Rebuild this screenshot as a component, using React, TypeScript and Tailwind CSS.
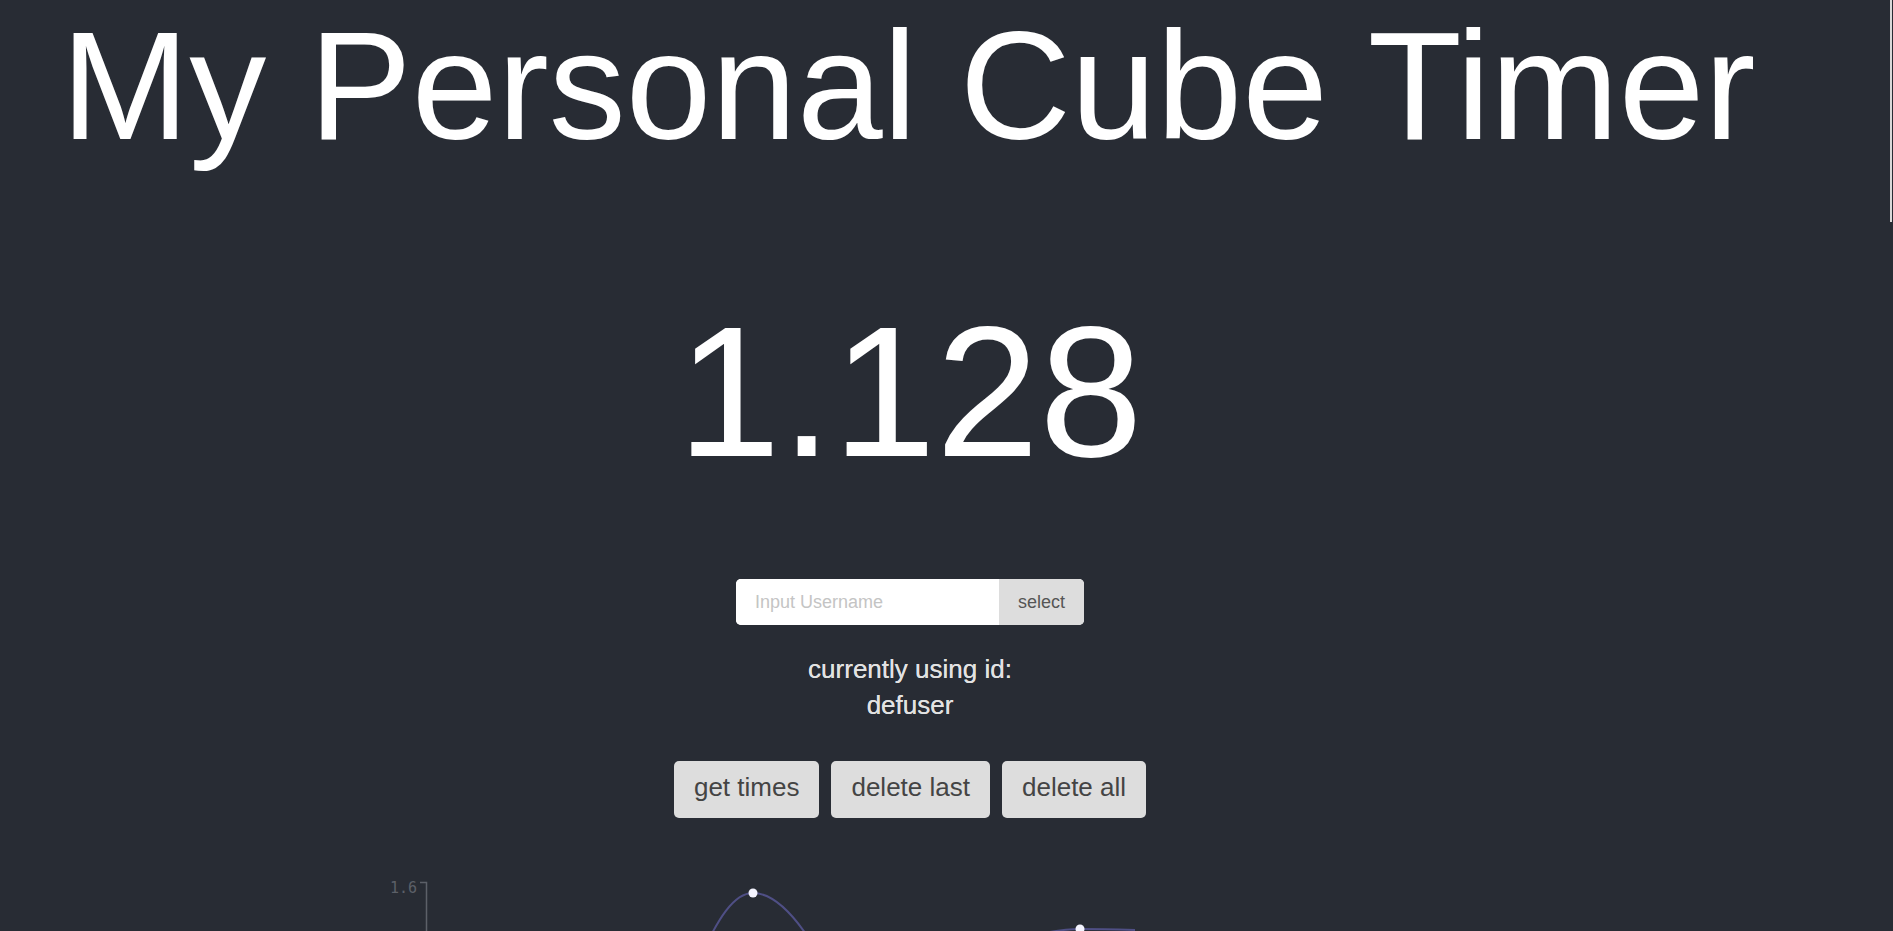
export default function App() {
  const buttons = ["get times", "delete last", "delete all"];

  return (
    <div className="relative h-screen w-full overflow-hidden bg-[#282c34] font-['Liberation_Sans',Arial,sans-serif]">
      {/* overlay scrollbar thumb */}
      <div className="absolute right-[1px] top-0 h-[222px] w-[2px] bg-[#d8d8d8]" />

      <div className="w-[1820px]">
        <h1 className="pl-[61px] pt-[10px] text-[154px] leading-[152px] text-white">
          My Personal Cube Timer
        </h1>

        <div className="mt-[138px] text-center text-[186px] leading-[184px] text-white">1.128</div>

        <div className="mt-[95px] flex justify-center">
          <div className="flex h-[46px] w-[348px] overflow-hidden rounded-[5px] bg-white">
            <input
              type="text"
              placeholder="Input Username"
              className="w-[263px] bg-white px-[19px] text-[18px] text-[#555] placeholder:text-[#c4c4c4] focus:outline-none"
            />
            <button className="flex-1 bg-[#dddddd] text-[18px] text-[#555]">select</button>
          </div>
        </div>

        <div className="mt-[26px] text-center text-[26px] font-medium leading-[36px] text-[#e2e2e2] [text-shadow:0_0_0.6px_#e2e2e2]">
          <div>currently using id:</div>
          <div>defuser</div>
        </div>

        <div className="mt-[38px] flex justify-center gap-[12px]">
          {buttons.map((b) => (
            <button
              key={b}
              className="h-[57px] rounded-[5px] bg-[#dddddd] px-[20px] pb-[4px] text-[26px] text-[#444]"
            >
              {b}
            </button>
          ))}
        </div>

        <svg width="1820" height="160" className="mt-[52px] block">
          <text x="390" y="23" fill="#5c6068" fontSize="15" fontFamily="'DejaVu Sans Mono', monospace">
            1.6
          </text>
          <path d="M420 12.5 H426.5 V160" stroke="#5c6068" strokeWidth="1.5" fill="none" />
          <path
            d="M695 100 C718 45, 735 23, 753 23 C772 23, 795 42, 822 90"
            stroke="#4f4f85"
            strokeWidth="2"
            fill="none"
          />
          <path d="M1030 66 Q1060 59 1080 59 T1135 60" stroke="#4f4f85" strokeWidth="2" fill="none" />
          <circle cx="753" cy="23" r="4.5" fill="#f4f4ff" />
          <circle cx="1080" cy="59" r="4.5" fill="#f4f4ff" />
        </svg>
      </div>
    </div>
  );
}
